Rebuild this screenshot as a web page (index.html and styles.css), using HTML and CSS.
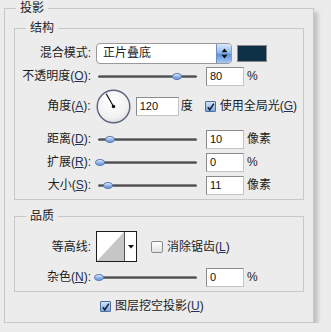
FILE: index.html
```html
<!DOCTYPE html>
<html lang="zh-CN">
<head>
    <meta charset="UTF-8">
    <meta name="viewport" content="width=device-width, initial-scale=1.0">
    <title>投影</title>
    <link rel="stylesheet" href="styles.css">
</head>
<body>
    <fieldset class="panel">
        <legend>投影</legend>
        <fieldset class="group group-structure">
            <legend>结构</legend>
            <div class="row row-blend">
                <label class="label">混合模式:</label>
                <div class="select">
                    <span class="select-text">正片叠底</span>
                    <span class="select-btn">
                        <svg width="7" height="11" viewBox="0 0 7 11"><path d="M3.5 0.5 L6.5 4.2 L0.5 4.2 Z M0.5 6.8 L6.5 6.8 L3.5 10.5 Z" fill="#111"/></svg>
                    </span>
                </div>
                <div class="swatch"></div>
            </div>
            <div class="row row-opacity">
                <label class="label">不透明度(<u class="key">O</u>):</label>
                <div class="slider"><span class="thumb" style="left: 80%;"></span></div>
                <input class="num" type="text" value="80">
                <span class="unit">%</span>
            </div>
            <div class="row row-angle">
                <label class="label">角度(<u class="key">A</u>):</label>
                <div class="dial">
                    <svg width="35" height="35" viewBox="0 0 35 35">
                        <defs>
                            <radialGradient id="dialFill" cx="0.45" cy="0.35" r="0.7">
                                <stop offset="0" stop-color="#ffffff"/>
                                <stop offset="0.7" stop-color="#f1f1f1"/>
                                <stop offset="1" stop-color="#d9d9d9"/>
                            </radialGradient>
                        </defs>
                        <circle cx="17.5" cy="17.5" r="16.3" fill="url(#dialFill)" stroke="#5a6380" stroke-width="1.4"/>
                        <line x1="17.5" y1="17.5" x2="10.2" y2="4.8" stroke="#111" stroke-width="1.2"/>
                        <circle cx="17.5" cy="17.5" r="1.7" fill="#111"/>
                    </svg>
                </div>
                <input class="num num-wide" type="text" value="120">
                <span class="unit">度</span>
                <span class="check checked">
                    <svg width="11" height="11" viewBox="0 0 11 11"><path d="M2.3 5.2 L4.6 8.3 L9.6 0.8" fill="none" stroke="#14213a" stroke-width="1.9"/></svg>
                </span>
                <span class="check-text">使用全局光(<u class="key">G</u>)</span>
            </div>
            <div class="row row-distance">
                <label class="label">距离(<u class="key">D</u>):</label>
                <div class="slider"><span class="thumb" style="left: 12%;"></span></div>
                <input class="num" type="text" value="10">
                <span class="unit">像素</span>
            </div>
            <div class="row row-tight">
                <label class="label">扩展(<u class="key">R</u>):</label>
                <div class="slider"><span class="thumb" style="left: 2%;"></span></div>
                <input class="num" type="text" value="0">
                <span class="unit">%</span>
            </div>
            <div class="row row-tight">
                <label class="label">大小(<u class="key">S</u>):</label>
                <div class="slider"><span class="thumb" style="left: 10%;"></span></div>
                <input class="num" type="text" value="11">
                <span class="unit">像素</span>
            </div>
        </fieldset>

        <fieldset class="group group-quality">
            <legend>品质</legend>
            <div class="row row-contour">
                <label class="label">等高线:</label>
                <div class="contour">
                    <span class="contour-curve">
                        <svg width="27" height="29" viewBox="0 0 27 29"><polygon points="0,29 27,0 27,29" fill="#c6c6c6"/></svg>
                    </span>
                    <span class="contour-btn">
                        <svg width="6" height="4" viewBox="0 0 6 4"><path d="M0 0 L6 0 L3 3.5 Z" fill="#111"/></svg>
                    </span>
                </div>
                <span class="check"></span>
                <span class="check-text">消除锯齿(<u class="key">L</u>)</span>
            </div>
            <div class="row row-noise">
                <label class="label">杂色(<u class="key">N</u>):</label>
                <div class="slider"><span class="thumb" style="left: 1%;"></span></div>
                <input class="num" type="text" value="0">
                <span class="unit">%</span>
            </div>
        </fieldset>

        <div class="row row-knockout">
            <span class="check checked">
                <svg width="11" height="11" viewBox="0 0 11 11"><path d="M2.3 5.2 L4.6 8.3 L9.6 0.8" fill="none" stroke="#14213a" stroke-width="1.9"/></svg>
            </span>
            <span class="check-text">图层挖空投影(<u class="key">U</u>)</span>
        </div>
    </fieldset>
</body>
</html>
```

FILE: styles.css
```css
body {
    margin: 0;
    background-color: #ececec;
    font-family: "Liberation Sans", "Noto Sans CJK SC", sans-serif;
    font-size: 12px;
    color: #1c1c1c;
}
fieldset {
    margin: 0;
    min-width: 0;
    border: 1px solid #c8c8c8;
}
legend {
    padding: 0 4px;
    line-height: 15px;
    color: #222;
}
.panel {
    box-sizing: border-box;
    width: 310px;
    margin: 1px 0 0 4px;
    padding: 5px 9px 9px 9px;
    box-shadow: 4px 4px 4px rgba(0, 0, 0, 0.18);
}
.panel > legend {
    margin-left: 2px;
}
.group {
    padding: 6px 6px 4px 6px;
}
.group > legend {
    margin-left: 5px;
}
.group-quality {
    margin-top: 9px;
    padding-top: 7px;
}
.row {
    display: flex;
    align-items: center;
    height: 20px;
}
.row-blend {
    height: 22px;
}
.row-opacity {
    margin-top: 2px;
}
.row-angle {
    height: 34px;
    margin-top: 3px;
}
.row-distance {
    margin-top: 6px;
}
.row-tight {
    margin-top: 3px;
}
.row-contour {
    height: 31px;
}
.row-noise {
    margin-top: 5px;
}
.row-knockout {
    height: 14px;
    margin-top: 7px;
    padding-left: 86px;
}
.label {
    width: 70px;
    text-align: right;
    white-space: nowrap;
    line-height: 14px;
}
.key {
    color: #22315c;
    text-decoration: underline;
}
.select {
    box-sizing: border-box;
    display: flex;
    width: 136px;
    height: 21px;
    margin-left: 5px;
    background-color: white;
    border: 1px solid #9a9a9a;
    border-radius: 4px;
    overflow: hidden;
}
.select-text {
    flex: 1;
    padding-left: 6px;
    line-height: 19px;
}
.select-btn {
    display: flex;
    align-items: center;
    justify-content: center;
    width: 14px;
    border-left: 1px solid #6f8fc0;
    background: linear-gradient(#d8e7fa, #94bbee 45%, #5f93dc 55%, #a6c8f3);
}
.swatch {
    box-sizing: border-box;
    width: 30px;
    height: 17px;
    margin-left: 5px;
    background-color: #0e3148;
    border: 1px solid #8a8a8a;
}
.slider {
    position: relative;
    width: 99px;
    height: 3px;
    margin-left: 7px;
    border-radius: 2px;
    background: linear-gradient(#9a9a9a, #4e4e4e 50%, #8c8c8c);
}
.thumb {
    position: absolute;
    top: -2px;
    box-sizing: border-box;
    width: 10px;
    height: 7px;
    margin-left: -5px;
    border: 1px solid #5d7cb2;
    border-radius: 50%;
    background: linear-gradient(#e3edfb, #87aee6 60%, #6f98d6);
}
.num {
    box-sizing: border-box;
    width: 38px;
    height: 19px;
    margin: 0 0 0 9px;
    padding: 0 3px;
    font-family: "Liberation Sans", sans-serif;
    font-size: 11px;
    color: #111;
    background-color: white;
    border: 1px solid #8c8c8c;
    border-right-color: #c4c4c4;
    border-bottom-color: #c4c4c4;
    outline: none;
}
.num-wide {
    width: 43px;
    margin-left: 5px;
}
.unit {
    margin-left: 3px;
    line-height: 14px;
}
.dial {
    display: flex;
    margin-left: 5px;
}
.row-angle .unit {
    margin-left: 2px;
}
.check {
    box-sizing: border-box;
    display: flex;
    width: 12px;
    height: 12px;
    border: 1px solid #8a8a8a;
    border-radius: 2px;
    background: linear-gradient(#ffffff, #e2e2e2);
}
.check.checked {
    width: 11px;
    height: 11px;
    border-color: #4e6d9e;
    border-radius: 1px;
    background: linear-gradient(#d3e3f8, #7ea8e2);
    overflow: visible;
}
.row-angle .check {
    margin-left: 12px;
}
.row-contour .check {
    margin-left: 14px;
}
.check-text {
    margin-left: 4px;
    line-height: 14px;
    white-space: nowrap;
}
.contour {
    box-sizing: border-box;
    display: flex;
    width: 41px;
    height: 31px;
    margin-left: 5px;
    background-color: white;
    border: 1px solid #1a1a1a;
}
.contour-curve {
    display: flex;
    width: 27px;
}
.contour-btn {
    display: flex;
    align-items: center;
    justify-content: center;
    flex: 1;
    border-left: 1px solid #555;
}
```
